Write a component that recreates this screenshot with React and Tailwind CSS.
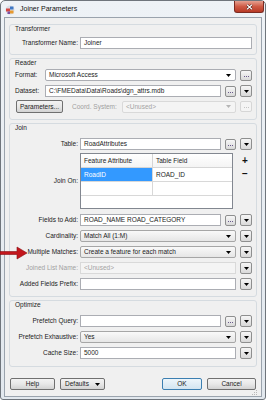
import React from "react";

const Tri = ({ color = "#000" }) => (
  <svg width="5" height="3" viewBox="0 0 5 3" className="shrink-0">
    <path d="M0 0h5L2.5 3z" fill={color} />
  </svg>
);

const Dots = ({ color }) => (
  <svg width="5" height="1" viewBox="0 0 5 1">
    <rect x="0" y="0" width="1" height="1" fill={color} />
    <rect x="2" y="0" width="1" height="1" fill={color} />
    <rect x="4" y="0" width="1" height="1" fill={color} />
  </svg>
);

const DotsBtn = ({ disabled, w = "w-[11px]" }) => (
  <div
    className={`${w} h-[11px] shrink-0 flex items-end justify-center pb-[3px] rounded-[2px] border ${
      disabled
        ? "border-[#d6d6d6] bg-[#f4f4f4]"
        : "border-[#8e8f8f] bg-gradient-to-b from-[#f6f6f6] to-[#d9d9d9]"
    }`}
  >
    <Dots color={disabled ? "#c4c4c4" : "#6a5a8c"} />
  </div>
);

const DropBtn = () => (
  <div className="w-[12px] h-[12px] shrink-0 flex items-center justify-center rounded-[2px] border border-[#8e8f8f] bg-gradient-to-b from-[#f6f6f6] to-[#d9d9d9]">
    <Tri />
  </div>
);

const Input = ({ value, w = "flex-1" }) => (
  <div className={`${w} min-w-0 h-[12px] bg-white border border-[#abadb3] flex items-center pl-[3px] whitespace-nowrap overflow-hidden`}>
    {value}
  </div>
);

const Combo = ({ value, disabled, white }) => (
  <div
    className={`flex-1 min-w-0 h-[12px] border rounded-[2px] flex items-center justify-between pl-[3px] pr-[4px] whitespace-nowrap ${
      disabled
        ? "border-[#d9d9d9] bg-[#f4f4f4] text-[#a3a3a3]"
        : white
        ? "border-[#abadb3] bg-white"
        : "border-[#a6a6a6] bg-gradient-to-b from-[#f9f9f9] to-[#e6e6e6]"
    }`}
  >
    <span>{value}</span>
    <Tri color={disabled ? "#b5b5b5" : "#000"} />
  </div>
);

const Row = ({ label, disabled, mt = "", children }) => (
  <div className={`flex items-center h-[12px] ${mt}`}>
    <span className={`w-[68px] shrink-0 text-right whitespace-nowrap ${disabled ? "text-[#a0a0a0]" : ""}`}>{label}</span>
    <div className="ml-[2px] flex-1 flex items-center gap-[4px] min-w-0">{children}</div>
  </div>
);

const Group = ({ title, h, children }) => (
  <div className={`${h} shrink-0 border border-[#d5dbe0] rounded-[3px] pr-[4px] flex flex-col`}>
    <div className="h-[7px] leading-[7px] pl-[5px]">{title}</div>
    {children}
  </div>
);

const Btn = ({ w, def, children }) => (
  <div
    className={`${w} h-[12px] rounded-[2px] border flex items-center justify-center gap-[6px] ${
      def
        ? "border-[#3c7fb1] bg-gradient-to-b from-[#eef6fb] to-[#d3e5f1]"
        : "border-[#707070] bg-gradient-to-b from-[#f3f3f3] via-[#e8e8e8] to-[#d3d3d3]"
    }`}
  >
    {children}
  </div>
);

const App = () => {
  return (
    <div className="w-[266px] h-[400px] bg-white">
      <div className="relative w-[266px] h-[400px] border border-[#6f757c] rounded-t-[5px] rounded-b-[3px] bg-gradient-to-b from-[#eef2f6] to-[#e2e8ee] px-[3px] pb-[3px] flex flex-col font-['Liberation_Sans',Arial,sans-serif] text-[6.5px] text-[#1b1b1b]">
        {/* title bar */}
        <div className="h-[16px] shrink-0 flex justify-between">
          <div className="flex items-center gap-[5px] pl-[1px] pt-[1px]">
            <svg width="10" height="10" viewBox="0 0 10 10">
              <circle cx="5" cy="5" r="4.5" fill="#d9dde6" />
              <path d="M1 3.5h4v3H1z" fill="#d64541" />
              <path d="M5 1.5h3.5v3H5z" fill="#3f78c5" />
              <path d="M5 5.5h3.5v3H5z" fill="#e89a2f" />
              <path d="M2.5 6.5h2.5v2.5H2.5z" fill="#7a4fa0" />
            </svg>
            <span className="text-[7px] text-[#111]">Joiner Parameters</span>
          </div>
          <div className="mr-[-2px] w-[30px] h-[12px] rounded-b-[3px] border border-t-0 border-[#7b2b22] bg-gradient-to-b from-[#e5a091] via-[#cf5a45] to-[#b73a26] flex items-center justify-center">
            <svg width="7" height="6" viewBox="0 0 7 6">
              <path d="M1 0.8l5 4.4M6 0.8l-5 4.4" stroke="#4a1810" strokeWidth="2.2" />
              <path d="M1 0.8l5 4.4M6 0.8l-5 4.4" stroke="#fff" strokeWidth="1.2" />
            </svg>
          </div>
        </div>

        {/* client area */}
        <div className="flex-1 border border-[#9aa3ad] bg-[#f0f0f0] flex flex-col pt-[6px] px-[4px]">
          <Group title="Transformer" h="h-[31px]">
            <Row label="Transformer Name:" mt="mt-[5px]">
              <Input value="Joiner" />
            </Row>
          </Group>

          <div className="mt-[3px]">
            <Group title="Reader" h="h-[62px]">
              <div className="flex items-center h-[12px] mt-[3px] pl-[5px]">
                <span className="w-[30px] shrink-0">Format:</span>
                <div className="flex-1 flex items-center gap-[4px]">
                  <Combo value="Microsoft Access" white />
                  <DotsBtn w="w-[12px]" />
                </div>
              </div>
              <div className="flex items-center h-[12px] mt-[4px] pl-[5px]">
                <span className="w-[30px] shrink-0">Dataset:</span>
                <div className="flex-1 flex items-center gap-[4px]">
                  <Input value="C:\FMEData\Data\Roads\dgn_attrs.mdb" />
                  <DotsBtn />
                  <DropBtn />
                </div>
              </div>
              <div className="flex items-center h-[13px] mt-[3px] pl-[6px]">
                <Btn w="w-[47px] h-[13px]">Parameters...</Btn>
                <span className="ml-[9px] w-[46px] shrink-0 text-[#a0a0a0] whitespace-nowrap">Coord. System:</span>
                <div className="ml-[4px] flex-1 flex items-center gap-[4px]">
                  <Combo value="<Unused>" disabled />
                  <DotsBtn w="w-[12px]" disabled />
                </div>
              </div>
            </Group>
          </div>

          <div className="mt-[3px]">
            <Group title="Join" h="h-[174px]">
              <Row label="Table:" mt="mt-[7px]">
                <Input value="RoadAttributes" />
                <DotsBtn />
                <DropBtn />
              </Row>
              <div className="flex items-center mt-[3px]">
                <span className="w-[68px] shrink-0 text-right">Join On:</span>
                <div className="ml-[2px] w-[153px] h-[56px] shrink-0 border border-[#828790] bg-white flex flex-col">
                  <div className="h-[14px] flex border-b border-[#d5d5d5] bg-gradient-to-b from-[#ffffff] to-[#f4f4f4]">
                    <div className="w-[72px] border-r border-[#d5d5d5] pl-[3px] flex items-center">Feature Attribute</div>
                    <div className="flex-1 pl-[3px] flex items-center">Table Field</div>
                  </div>
                  <div className="h-[14px] flex border-b border-[#d8d8d8]">
                    <div className="w-[72px] border-r border-[#d8d8d8] bg-[#3399ff] text-white pl-[3px] flex items-center">RoadID</div>
                    <div className="flex-1 pl-[3px] flex items-center">ROAD_ID</div>
                  </div>
                  <div className="h-[14px] flex border-b border-[#d8d8d8]">
                    <div className="w-[72px] border-r border-[#d8d8d8]" />
                    <div className="flex-1" />
                  </div>
                </div>
                <div className="ml-[6px] w-[12px] h-[56px] flex flex-col items-center pt-[3px] gap-[3px] text-[10px] font-bold leading-[10px] text-[#111]">
                  <span>+</span>
                  <span>−</span>
                </div>
              </div>
              <div className="flex flex-col gap-[4px] mt-[5px]">
                <Row label="Fields to Add:">
                  <Input value="ROAD_NAME ROAD_CATEGORY" />
                  <DotsBtn />
                  <DropBtn />
                </Row>
                <Row label="Cardinality:">
                  <Combo value="Match All (1:M)" />
                  <DropBtn />
                </Row>
                <Row label="Multiple Matches:">
                  <Combo value="Create a feature for each match" />
                  <DropBtn />
                </Row>
                <Row label="Joined List Name:" disabled>
                  <div className="flex-1 h-[12px] border border-[#d9d9d9] bg-[#f4f4f4] text-[#a3a3a3] pl-[3px] flex items-center">
                    {"<Unused>"}
                  </div>
                  <DropBtn />
                </Row>
                <Row label="Added Fields Prefix:">
                  <Input value="" />
                  <DropBtn />
                </Row>
              </div>
            </Group>
          </div>

          <div className="mt-[3px]">
            <Group title="Optimize" h="h-[67px]">
              <div className="flex flex-col gap-[4px] mt-[7px]">
                <Row label="Prefetch Query:">
                  <Input value="" />
                  <DotsBtn />
                  <DropBtn />
                </Row>
                <Row label="Prefetch Exhaustive:">
                  <Combo value="Yes" />
                  <DropBtn />
                </Row>
                <Row label="Cache Size:">
                  <Input value="5000" />
                  <DropBtn />
                </Row>
              </div>
            </Group>
          </div>

          <div className="mt-[11px] flex justify-between px-[1px]">
            <div className="flex gap-[5px]">
              <Btn w="w-[45px]">Help</Btn>
              <Btn w="w-[45px]">
                <span>Defaults</span>
                <Tri />
              </Btn>
            </div>
            <div className="flex gap-[5px]">
              <Btn w="w-[40px]" def>OK</Btn>
              <Btn w="w-[49px]">Cancel</Btn>
            </div>
          </div>
          <div className="flex-1 flex justify-end items-end pb-[1px] pr-[0px]">
            <svg width="5" height="5" viewBox="0 0 5 5">
              <rect x="4" y="0" width="1" height="1" fill="#b8b8b8" />
              <rect x="2" y="2" width="1" height="1" fill="#b8b8b8" />
              <rect x="4" y="2" width="1" height="1" fill="#b8b8b8" />
              <rect x="0" y="4" width="1" height="1" fill="#b8b8b8" />
              <rect x="2" y="4" width="1" height="1" fill="#b8b8b8" />
              <rect x="4" y="4" width="1" height="1" fill="#b8b8b8" />
            </svg>
          </div>
        </div>

        {/* annotation arrow */}
        <svg className="absolute left-[-1px] top-[245px]" width="28" height="14" viewBox="0 0 28 14">
          <path d="M0 5.5h17V1l10 6-10 6V8.5H0z" fill="#c3161c" stroke="#8a0e12" strokeWidth="0.6" />
        </svg>
      </div>
    </div>
  );
};

export default App;
